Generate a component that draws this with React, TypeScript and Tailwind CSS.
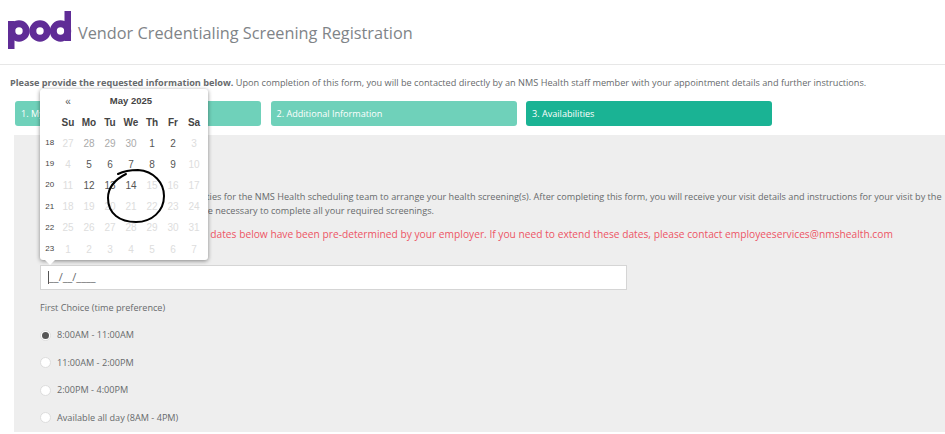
const weeks = [
  { n: 18, days: [["27", 0], ["28", 1], ["29", 1], ["30", 1], ["1", 2], ["2", 2], ["3", 0]] },
  { n: 19, days: [["4", 0], ["5", 2], ["6", 2], ["7", 2], ["8", 2], ["9", 2], ["10", 0]] },
  { n: 20, days: [["11", 0], ["12", 2], ["13", 2], ["14", 2], ["15", 0], ["16", 0], ["17", 0]] },
  { n: 21, days: [["18", 0], ["19", 0], ["20", 0], ["21", 0], ["22", 0], ["23", 0], ["24", 0]] },
  { n: 22, days: [["25", 0], ["26", 0], ["27", 0], ["28", 0], ["29", 0], ["30", 0], ["31", 0]] },
  { n: 23, days: [["1", 0], ["2", 0], ["3", 0], ["4", 0], ["5", 0], ["6", 0], ["7", 0]] },
] as const;

const dayColor = ["text-[#dddddd]", "text-[#aaaaaa]", "text-[#555555]"];
const times = ["8:00AM - 11:00AM", "11:00AM - 2:00PM", "2:00PM - 4:00PM", "Available all day (8AM - 4PM)"];
const steps = ["1. My Information", "2. Additional Information", "3. Availabilities"];

function PodLogo() {
  return (
    <svg width="66" height="40" viewBox="0 0 66 40" className="shrink-0">
      <g fill="none" stroke="#5f2c96" strokeWidth="7">
        <circle cx="12" cy="21" r="7.2" />
        <circle cx="33" cy="21" r="7.2" />
        <circle cx="53.5" cy="21" r="7.2" />
      </g>
      <rect x="1" y="11" width="6.5" height="28" fill="#5f2c96" />
      <rect x="57.5" y="1" width="6.5" height="30" fill="#5f2c96" />
    </svg>
  );
}

function Calendar() {
  return (
    <div className="absolute left-[40px] top-[89px] z-10 w-[168px] rounded-[3px] bg-white font-['Liberation_Sans',sans-serif] text-[10px] shadow-[0_1px_4px_rgba(0,0,0,0.45)]">
      <div className="grid grid-cols-[15.5px_repeat(7,21px)] pl-[2px] pt-[1.5px]">
        <div className="h-[21px]" />
        <div className="flex h-[21px] items-center justify-center text-[#555555]">«</div>
        <div className="col-span-5 flex h-[21px] items-center justify-center text-[9.5px] font-bold text-[#444444]">May 2025</div>
        <div className="h-[21px]" />
        <div className="h-[21px]" />
        {["Su", "Mo", "Tu", "We", "Th", "Fr", "Sa"].map((d) => (
          <div key={d} className="flex h-[21px] items-center justify-center font-bold text-[#444444]">
            {d}
          </div>
        ))}
        {weeks.map((w) => (
          <div key={w.n} className="contents">
            <div className="flex h-[21.2px] items-center justify-center text-[8px] text-[#444444]">{w.n}</div>
            {w.days.map(([d, tone], i) => (
              <div key={i} className={`flex h-[21.2px] items-center justify-center ${dayColor[tone]}`}>
                {d}
              </div>
            ))}
          </div>
        ))}
      </div>
      <div className="absolute -bottom-[5px] left-[5px] h-0 w-0 border-x-[5px] border-t-[5px] border-x-transparent border-t-white" />
    </div>
  );
}

export default function App() {
  return (
    <div className="relative h-[434px] w-[945px] overflow-hidden bg-white font-['Open_Sans',sans-serif] text-[#676a6c]">
      <header className="flex h-[65px] items-start gap-[5px] border-b border-[#e7e7e7] pl-[7px] pt-[10px]">
        <PodLogo />
        <h1 className="pt-[11px] text-[16.3px] leading-[25px] text-[#7f8488]">Vendor Credentialing Screening Registration</h1>
      </header>

      <p className="mt-[11px] whitespace-nowrap pl-[10px] text-[9.17px] leading-[13px]">
        <b>Please provide the requested information below.</b> Upon completion of this form, you will be contacted directly by an NMS Health staff member with your appointment details and further instructions.
      </p>

      <div className="mt-[12px] flex gap-[9.5px] pl-[15px]">
        {steps.map((s, i) => (
          <div
            key={s}
            className={`flex h-[25px] w-[246px] items-center rounded-[3px] pl-[6px] text-[9.1px] text-white ${i === 2 ? "bg-[#1ab394]" : "bg-[#6fd1ba]"}`}
          >
            {s}
          </div>
        ))}
      </div>

      <main className="ml-[14px] mt-[9px] h-[297px] w-[931px] overflow-hidden bg-[#eeeeee] pl-[26px] pt-[55px]">
        <p className="whitespace-nowrap text-[9.15px] leading-[14px]">
          Please provide your preferred availabilities for the NMS Health scheduling team to arrange your health screening(s). After completing this form, you will receive your visit details and instructions for your visit by the
          <br />
          Please select all of those dates which are necessary to complete all your required screenings.
        </p>
        <p className="mt-[8px] whitespace-nowrap text-[10.22px] font-medium leading-[16px] text-[#ed5565]">
          Please note that all your availability dates below have been pre-determined by your employer. If you need to extend these dates, please contact employeeservices@nmshealth.com
        </p>

        <div className="mt-[23px] flex h-[25px] w-[587px] items-center border border-[#d5d5d5] bg-white pl-[7px] text-[11px]">
          <span className="h-[13px] w-px bg-[#555555]" />
          <span>__/__/____</span>
        </div>

        <p className="mt-[11px] text-[9.15px] leading-[13px]">First Choice (time preference)</p>

        <div className="mt-[7.5px] flex flex-col">
          {times.map((t, i) => (
            <label key={t} className="flex h-[27.5px] items-center gap-[6px] text-[9.15px]">
              <span className="flex h-[11px] w-[11px] items-center justify-center rounded-full border border-[#dddddd] bg-white">
                {i === 0 && <span className="h-[7px] w-[7px] rounded-full bg-[#555555]" />}
              </span>
              {t}
            </label>
          ))}
        </div>
      </main>

      <Calendar />

      <svg width="70" height="64" viewBox="0 0 70 64" className="absolute left-[102px] top-[164px] z-20" fill="none">
        <path
          d="M16 10 C22 7 30 6 36 6 C52 7 62 19 62 32 C62 47 50 58 34 58 C18 58 6 50 6 34 C6 24 12 16 24 10"
          stroke="#000000"
          strokeWidth="2"
          strokeLinecap="round"
        />
      </svg>
    </div>
  );
}
